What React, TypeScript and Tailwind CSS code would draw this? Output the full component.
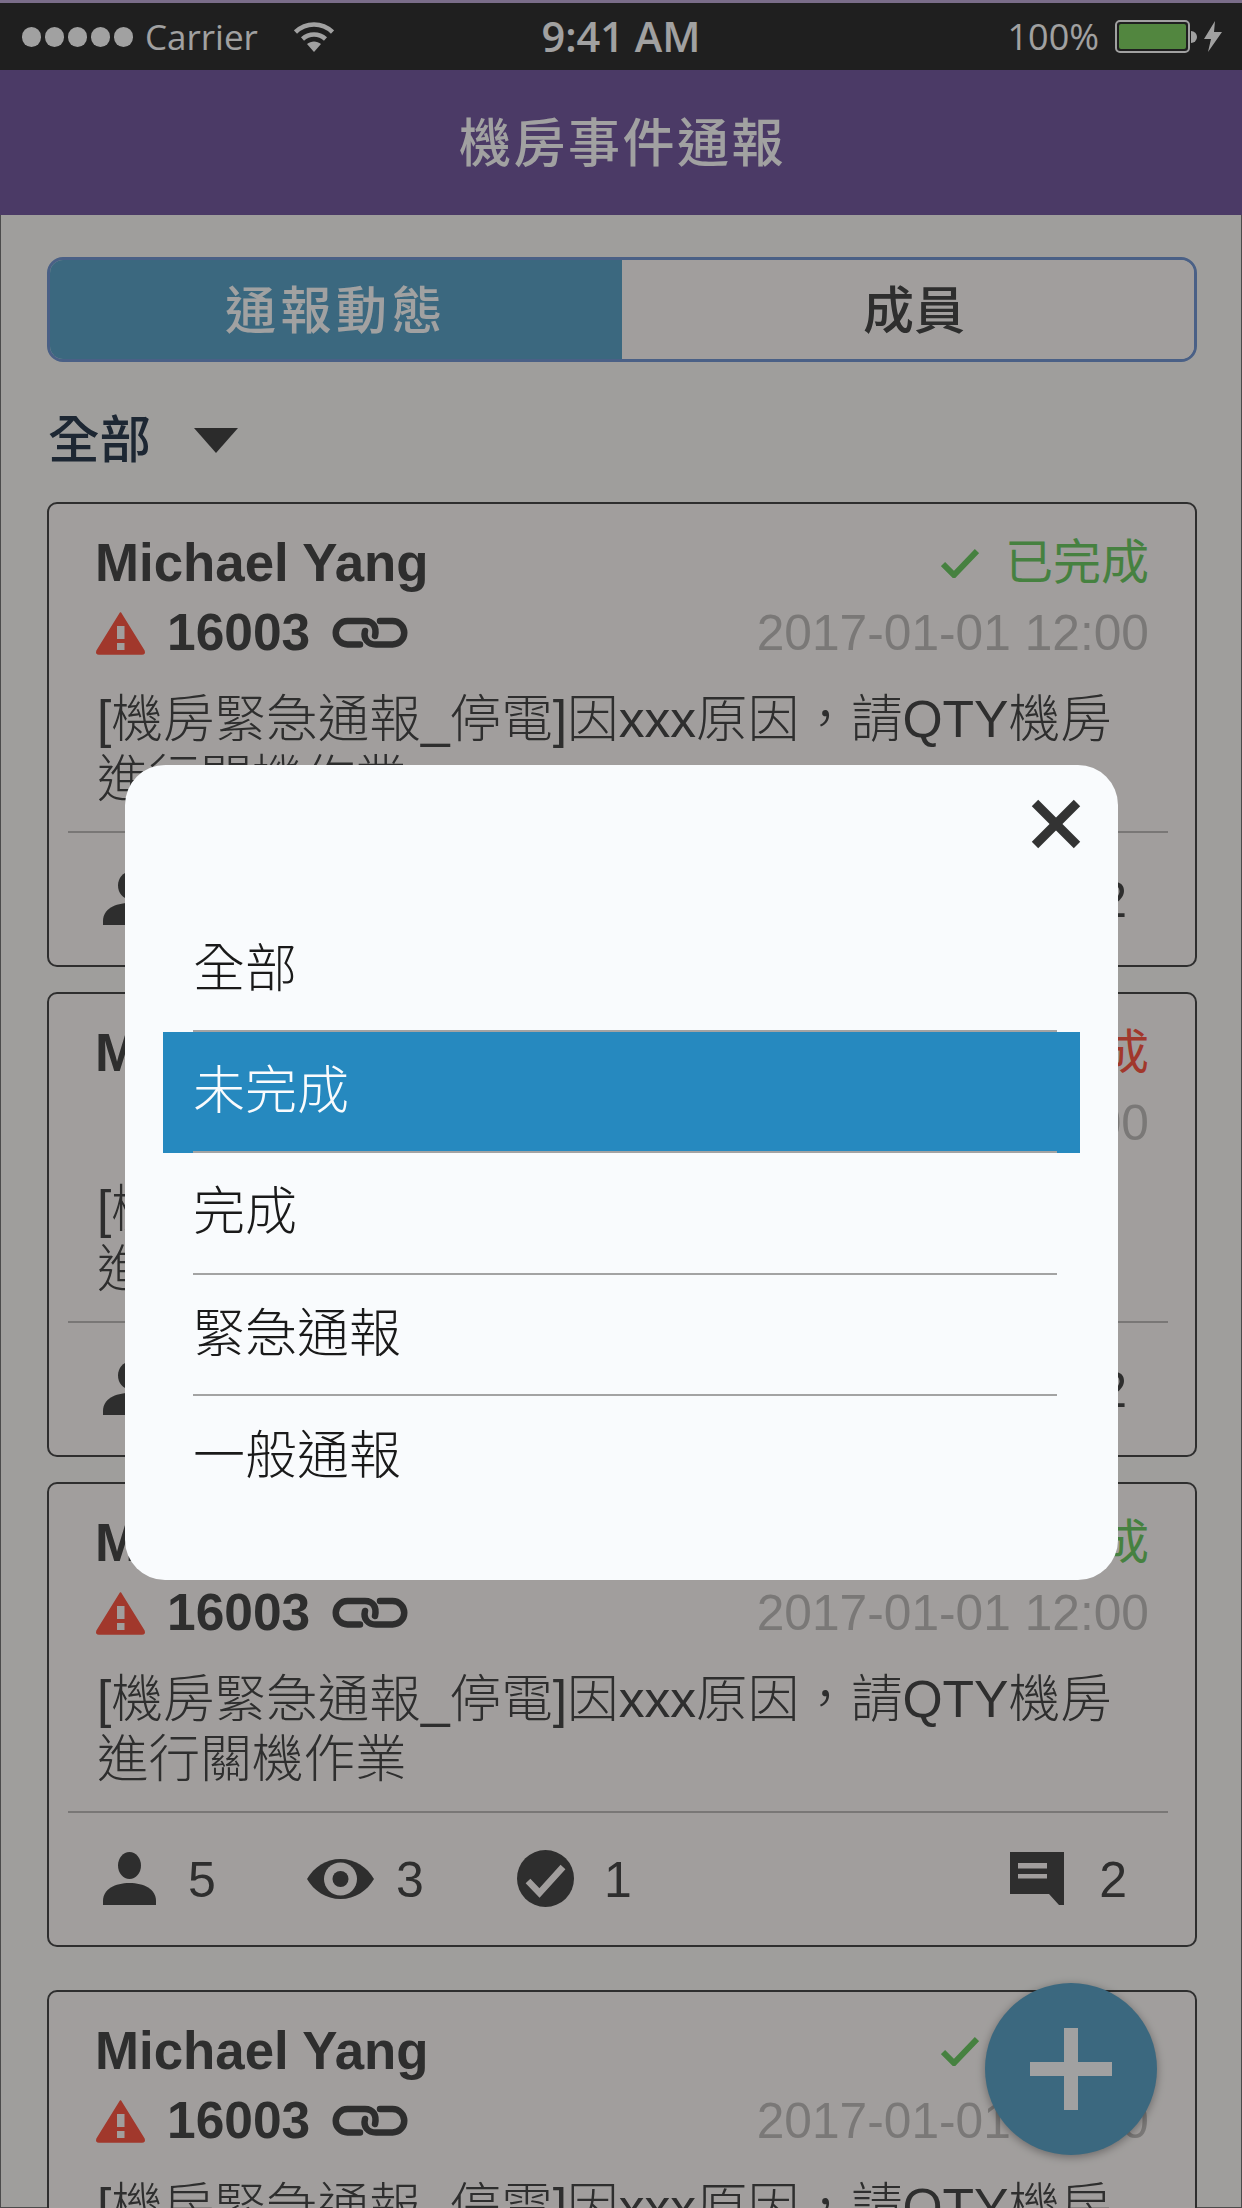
import { X } from "lucide-react";

const cards = [
  { done: true, urgent: true, mt: "" },
  { done: false, urgent: false, mt: "mt-[25px]" },
  { done: true, urgent: true, mt: "mt-[25px]" },
  { done: true, urgent: true, mt: "mt-[43px]" },
];

const filters = ["全部", "未完成", "完成", "緊急通報", "一般通報"];

function Warning() {
  return (
    <svg viewBox="0 0 51 44" className="w-[51px] h-[44px] shrink-0">
      <path d="M25.5 2 L49 40 Q50 43 47 43 L4 43 Q1 43 2 40 Z" fill="#ff5a47" stroke="#ff5a47" strokeWidth="1.5" strokeLinejoin="round" />
      <rect x="22" y="15" width="7.5" height="13" fill="#fffbf9" />
      <rect x="22" y="32" width="7.5" height="7" fill="#fffbf9" />
    </svg>
  );
}

function LinkIcon() {
  return (
    <svg viewBox="0 0 76 32" fill="none" stroke="#494949" strokeWidth="6.5" strokeLinecap="round" className="w-[76px] h-[32px] shrink-0">
      <path d="M28 27.500 H15.500 A11.750 11.750 0 0 1 15.500 4 H33 C41 4 45 10 43 19" />
      <path d="M48 4 H60.500 A11.750 11.750 0 0 1 60.500 27.500 H44 C36 27.500 31 22 33 14" />
    </svg>
  );
}

function Person() {
  return (
    <svg viewBox="0 0 53 53" fill="#494949" className="w-[53px] h-[53px] shrink-0">
      <ellipse cx="26.5" cy="13.5" rx="11.5" ry="13.5" />
      <path d="M0 53 V49 C0 37 12 31 26.5 31 C41 31 53 37 53 49 V53 Z" />
    </svg>
  );
}

function Eye() {
  return (
    <svg viewBox="0 0 67 40" className="w-[67px] h-[40px] shrink-0">
      <path d="M0 20 C7 8 19 0 33.5 0 C48 0 60 8 67 20 C60 32 48 40 33.5 40 C19 40 7 32 0 20 Z" fill="#494949" />
      <circle cx="33.5" cy="20" r="16.5" fill="#fffbf9" />
      <circle cx="33.5" cy="20" r="8" fill="#494949" />
    </svg>
  );
}

function CheckCircle() {
  return (
    <svg viewBox="0 0 57 57" className="w-[57px] h-[57px] shrink-0">
      <circle cx="28.5" cy="28.5" r="28.5" fill="#494949" />
      <path d="M11 31 L22.5 43 L46 17" fill="none" stroke="#fffbf9" strokeWidth="6.5" />
    </svg>
  );
}

function Comment() {
  return (
    <svg viewBox="0 0 54 53" className="w-[54px] h-[53px] shrink-0">
      <path d="M0 0 H54 V53 H49 L39 42 H0 Z" fill="#494949" />
      <rect x="8" y="11" width="29" height="5.5" fill="#fffbf9" />
      <rect x="8" y="22" width="29" height="4.5" fill="#fffbf9" />
    </svg>
  );
}

function Card({ done, urgent, mt }: { done: boolean; urgent: boolean; mt: string }) {
  return (
    <div className={`h-[465px] shrink-0 bg-[#fffbf9] border-2 border-[#494949] rounded-[10px] ${mt}`}>
      <div className="px-[46px] pt-[31px]">
        <div className="flex items-center justify-between h-[56px]">
          <span className="text-[52.8px] font-bold text-[#494949]">Michael Yang</span>
          <span className={`flex items-center gap-[26px] text-[48px] ${done ? "text-[#70cc66]" : "text-[#ff5a47]"}`}>
            {done && (
              <svg viewBox="0 0 38 30" fill="none" stroke="#70cc66" strokeWidth="6" className="w-[38px] h-[30px]">
                <path d="M2 16 L13 27 L36 3" />
              </svg>
            )}
            {done ? "已完成" : "未完成"}
          </span>
        </div>
        <div className="flex items-center justify-between h-[84px]">
          <div className={`flex items-center ${urgent ? "" : "pl-[72px]"}`}>
            {urgent && <Warning />}
            <span className="ml-[21px] text-[51.5px] font-bold text-[#494949]">16003</span>
            <span className="ml-[22px]"><LinkIcon /></span>
          </div>
          <span className="text-[49.7px] text-[#c2bfbd]">2017-01-01 12:00</span>
        </div>
        <p className="mt-[14px] ml-[2px] text-[51.6px] leading-[60px] text-[#494949] font-light">
          [機房緊急通報_停電]因xxx原因，請QTY機房進行關機作業
        </p>
      </div>
      <div className="mt-[22px] ml-[19px] mr-[27px] h-[2px] bg-[#c0bdbb]" />
      <div className="flex items-center h-[131px] pl-[54px] pr-[68px] text-[50px] text-[#494949]">
        <Person />
        <span className="ml-[32px] w-[119px] pt-[3px]">5</span>
        <Eye />
        <span className="ml-[22px] w-[121px] pt-[3px]">3</span>
        <CheckCircle />
        <span className="ml-[30px] pt-[3px]">1</span>
        <div className="ml-auto"><Comment /></div>
        <span className="ml-[35px] pt-[3px]">2</span>
      </div>
    </div>
  );
}

export default function App() {
  return (
    <div className="relative w-[1242px] h-[2208px] overflow-hidden bg-[#fcfbf8] font-['Liberation_Sans','Noto_Sans_CJK_TC',sans-serif]">
      {/* status bar */}
      <div className="flex items-center justify-between h-[70px] border-t-[3px] border-[#c2adda] bg-[#313131] text-white font-['Open_Sans','Noto_Sans',sans-serif]">
        <div className="flex items-center pl-[22px] w-[400px]">
          <div className="flex gap-[4px]">
            {[0, 1, 2, 3, 4].map((i) => (
              <span key={i} className="w-[19px] h-[20px] rounded-full bg-white" />
            ))}
          </div>
          <span className="ml-[12px] text-[35px] leading-none">Carrier</span>
          <svg viewBox="0 0 40 32" className="ml-[36px] w-[40px] h-[32px]" fill="none" stroke="#ffffff" strokeWidth="4.5">
            <path d="M1.5 11 C12 1 28 1 38.500 11" />
            <path d="M8.5 18 C15 12 25 12 31.500 18" />
            <path d="M13 23 L20 31 L27 23 C23 19.500 17 19.500 13 23 Z" fill="#ffffff" stroke="none" />
          </svg>
        </div>
        <span className="text-[41.500px] font-semibold leading-none">9:41 AM</span>
        <div className="flex items-center justify-end pr-[20px] w-[400px]">
          <span className="text-[36px] leading-none">100%</span>
          <div className="ml-[16px] w-[75px] h-[33px] rounded-[5px] border-2 border-white p-[2px]">
            <div className="w-full h-full rounded-[2px] bg-[#82d564]" />
          </div>
          <div className="ml-[1px] w-[6px] h-[12px] rounded-r-full bg-white" />
          <svg viewBox="0 0 18 31" className="ml-[7px] w-[18px] h-[31px]" fill="#ffffff">
            <path d="M11 0 L0 18 H7 L4 31 L18 11 H10 Z" />
          </svg>
        </div>
      </div>

      {/* nav */}
      <div className="flex items-center justify-center h-[145px] pt-[2px] pl-[3px] bg-[#775ca2]">
        <h1 className="text-[52px] font-medium text-white tracking-[2.500px]">機房事件通報</h1>
      </div>

      <main className="flex flex-col h-[1993px] pl-[46px] pr-[44px] pt-[42px] border-x border-b border-[#777777]">
        {/* tabs */}
        <div className="flex h-[105px] shrink-0 rounded-[16px] overflow-hidden border-[3px] border-[#7599d4] text-[51px] font-medium">
          <div className="flex items-center justify-center w-[572px] pt-[5px] bg-[#5ea5c9] text-white tracking-[4.5px]">通報動態</div>
          <div className="flex items-center justify-center flex-1 pt-[5px] pl-[12px] bg-[#fffbf9] text-[#494949]">成員</div>
        </div>

        {/* filter */}
        <div className="flex items-center h-[60px] shrink-0 mt-[48px] pl-[1px] pt-[1px]">
          <span className="text-[51.5px] font-medium text-[#2e3e51]">全部</span>
          <span className="ml-[43px] w-0 h-0 border-x-[22px] border-x-transparent border-t-[25px] border-t-[#454545]" />
        </div>

        <div className="flex flex-col mt-[32px]">
          {cards.map((c, i) => (
            <Card key={i} done={c.done} urgent={c.urgent} mt={c.mt} />
          ))}
        </div>
      </main>

      {/* fab */}
      <div className="absolute left-[985px] top-[1983px] flex items-center justify-center w-[172px] h-[172px] rounded-full bg-[#5ea5c9] shadow-[0_2px_10px_rgba(0,0,0,0.35)]">
        <svg viewBox="0 0 82 82" className="w-[82px] h-[82px]" fill="#ffffff">
          <rect x="34" y="0" width="14" height="82" />
          <rect x="0" y="34" width="82" height="14" />
        </svg>
      </div>

      {/* dim layer + filter dialog */}
      <div className="absolute inset-0 bg-black/[0.37]" />
      <div className="absolute left-[125px] top-[765px] w-[993px] h-[815px] rounded-[40px] bg-[#f9fbfd] px-[38px] pt-[145px]">
        <X className="absolute right-[20px] top-[17px] w-[84px] h-[84px] text-[#333333]" strokeWidth={2.6} strokeLinecap="butt" />
        <ul>
          {filters.map((f, i) => (
            <li key={f} className={`h-[121.500px] pl-[30px] pr-[23px] text-[52px] font-light ${i === 1 ? "bg-[#2689bf] text-[#f9fbfd]" : "text-[#1a1a1a]"}`}>
              <div className={`flex items-center h-full pb-[1px] ${i < 4 ? "border-b-2 border-[#a3a3a3]" : ""}`}>{f}</div>
            </li>
          ))}
        </ul>
      </div>
    </div>
  );
}
